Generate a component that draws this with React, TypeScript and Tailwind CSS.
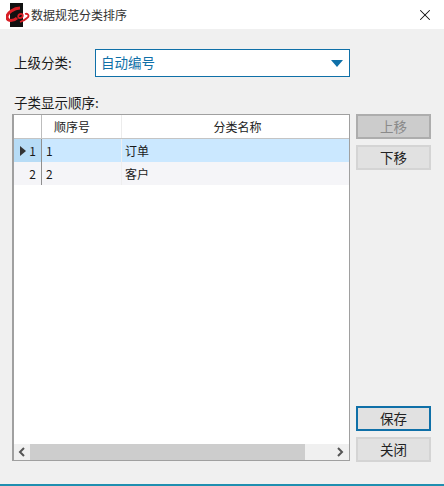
import { X } from "lucide-react";

const FONT = "font-['Noto_Sans_CJK_SC','Noto_Sans',sans-serif]";

function Logo() {
  return (
    <svg width="24" height="24" viewBox="0 0 24 24" className="shrink-0">
      <rect x="4" y="0" width="13" height="24" fill="#111" />
      <path d="M14 5 C8 5 1 10 1 14 C1 19 8 18 11 15" fill="none" stroke="#d81f26" strokeWidth="3" />
      <path d="M15 11 C12 11 11 15 14 15 C17 15 18 11 15 11 Z" fill="none" stroke="#d81f26" strokeWidth="1.8" />
      <path d="M19 11 C22 10 24 13 21 15 C19 17 17 18 14 19" fill="none" stroke="#d81f26" strokeWidth="1.8" />
    </svg>
  );
}

function SideButton({ label, variant }: { label: string; variant?: "disabled" | "default" }) {
  const cls =
    variant === "disabled"
      ? "border-2 border-[#adadad] bg-[#cccccc] text-[#8a8a8a]"
      : variant === "default"
        ? "border-2 border-[#0f70a8] bg-[#e1e1e1] text-[#222]"
        : "border-2 border-[#d4d4d4] bg-[#e1e1e1] text-[#222]";
  return (
    <button className={`flex h-[25px] w-[75px] items-center justify-center text-[13.5px] leading-none ${cls}`}>
      {label}
    </button>
  );
}

const rows = [
  { no: "1", seq: "1", name: "订单", selected: true },
  { no: "2", seq: "2", name: "客户", selected: false },
];

export default function App() {
  return (
    <div className={`flex h-[486px] w-[444px] flex-col bg-[#f0f0f0] text-[#1a1a1a] ${FONT}`}>
      <div className="flex h-[29px] shrink-0 items-center bg-white pl-[6px] pr-[10px]">
        <Logo />
        <span className="ml-[1px] flex-1 text-[12px] leading-none text-[#333]">数据规范分类排序</span>
        <X className="h-[18px] w-[18px] text-[#111]" strokeWidth={1.4} />
      </div>

      <div className="flex flex-1 flex-col pl-[12px] pr-[13px] pt-[20px]">
        <div className="flex h-[28px] items-center">
          <span className="ml-[2px] w-[81px] text-[13.5px] leading-none">上级分类:</span>
          <div className="flex h-[28px] w-[255px] items-center justify-between border-[1px] border-[#0f70a8] bg-white pl-[5px] pr-[6px] text-[13.5px] text-[#0f70a8]">
            <span className="leading-none">自动编号</span>
            <span className="h-0 w-0 border-x-[6px] border-t-[7px] border-x-transparent border-t-[#0f70a8]" />
          </div>
        </div>

        <div className="ml-[2px] mt-[18px] h-[19px] text-[13.5px] leading-[14px]">子类显示顺序:</div>

        <div className="flex flex-1 gap-[6px]">
          <div className="flex h-[347px] w-[338px] flex-col border-[1px] border-l-2 border-[#a0a0a0] bg-white">
            <div className="flex h-[24px] shrink-0 border-b border-[#c4c4c4] text-[12px] text-[#222]">
              <div className="w-[28px] border-r border-[#bdbdbd] bg-white" />
              <div className="flex w-[80px] items-center border-r border-[#ececec] pl-[12px]">顺序号</div>
              <div className="flex flex-1 items-center justify-center pl-[4px]">分类名称</div>
            </div>
            {rows.map((r) => (
              <div
                key={r.no}
                className={`flex h-[23px] shrink-0 text-[12px] ${r.selected ? "bg-[#cbe8ff]" : "bg-[#f5f5f8]"}`}
              >
                <div
                  className={`flex w-[28px] items-center justify-end border-r border-[#8f8f8f] pr-[5px] ${
                    r.selected ? "bg-[#b7dcf6]" : "bg-[#f5f5f8]"
                  }`}
                >
                  {r.selected && (
                    <span className="mr-[3px] h-0 w-0 border-y-[5px] border-l-[6px] border-y-transparent border-l-[#333]" />
                  )}
                  <span>{r.no}</span>
                </div>
                <div className="flex w-[80px] items-center border-r border-[#eeeeee] pl-[4px]">{r.seq}</div>
                <div className="flex flex-1 items-center pl-[3px]">{r.name}</div>
              </div>
            ))}
            <div className="flex-1" />
            <div className="flex h-[16px] shrink-0 items-center bg-[#f0f0f0]">
              <svg width="16" height="16" viewBox="0 0 16 16" className="shrink-0">
                <path d="M10 4 L6 8 L10 12" fill="none" stroke="#555" strokeWidth="2" />
              </svg>
              <div className="h-full flex-1 pr-[17px]">
                <div className="h-full w-[275px] bg-[#cdcdcd]" />
              </div>
              <svg width="17" height="16" viewBox="0 0 17 16" className="-ml-[17px] shrink-0">
                <path d="M6 4 L10 8 L6 12" fill="none" stroke="#555" strokeWidth="2" />
              </svg>
            </div>
          </div>

          <div className="flex flex-col">
            <SideButton label="上移" variant="disabled" />
            <div className="mt-[6px]">
              <SideButton label="下移" />
            </div>
            <div className="mt-[236px]">
              <SideButton label="保存" variant="default" />
            </div>
            <div className="mt-[6px]">
              <SideButton label="关闭" />
            </div>
          </div>
        </div>
      </div>
      <div className="h-[2px] shrink-0 bg-[#1f8fb0]" />
    </div>
  );
}
